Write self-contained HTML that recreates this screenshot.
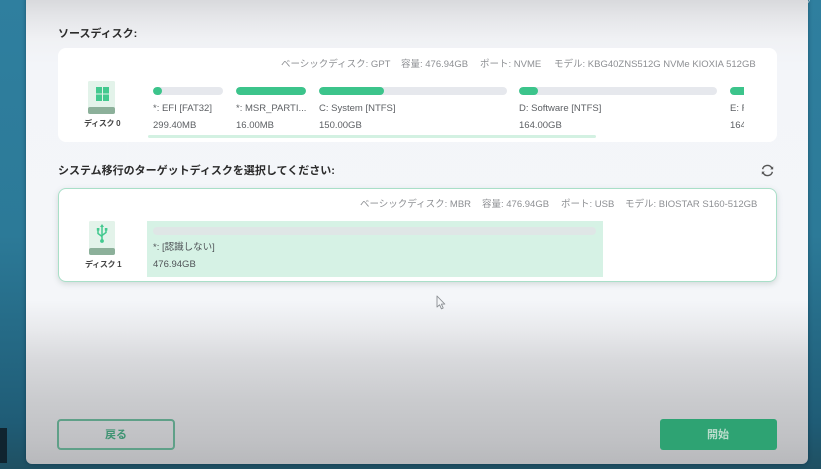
<!DOCTYPE html>
<html><head><meta charset="utf-8">
<style>
*{box-sizing:border-box}
html,body{margin:0;padding:0}
body{width:821px;height:469px;overflow:hidden;position:relative;background:linear-gradient(180deg,#2f7f9f 0,#2c7a98 50%,#1f5c76 90%,#1f5062 100%);font-family:"Liberation Sans","Noto Sans CJK JP",sans-serif;color:#555}
#wrap{position:absolute;left:0;top:0;width:821px;height:469px;filter:blur(.35px)}
.abs,.t{position:absolute}
.t{white-space:nowrap;line-height:14px}
#panel{position:absolute;left:26px;top:-6px;width:782px;height:470px;border-radius:6px;background:linear-gradient(180deg,#d4d5d8 0,#e4e5e8 22px,#f0f1f4 45px,#f3f5f9 70px,#f4f6f9 306px,#e8e9ec 336px,#d8d9dc 366px,#cacbce 406px,#c0c1c4 446px,#b8b9bc 470px);box-shadow:0 0 4px rgba(0,30,50,.45)}
.card{position:absolute;background:#fff;border-radius:8px}
.h{font-size:11px;font-weight:bold;color:#2b2b2b}
.g{font-size:9.5px;color:#8d8f93}
.p{font-size:9.5px;color:#5d6064}
.d{font-size:8px;font-weight:bold;color:#444;letter-spacing:-.3px}
.bar{position:absolute;height:8px;background:#e6e8ed;border-radius:4px;overflow:hidden}
.bar i{display:block;height:8px;background:#3cc48b;border-radius:4px}
</style></head><body>
<div id="wrap">
<div class="abs" style="left:0;top:428px;width:7px;height:35px;background:#10242f"></div>
<div class="t" style="left:782px;top:-6px;font-size:9px;color:#e8eef1">使 セッ</div>
<div id="panel"></div>

<div class="t h" style="left:58px;top:27px">ソースディスク:</div>
<div class="card" style="left:58px;top:48px;width:719px;height:94px"></div>
<div class="t g" style="left:281px;top:58px">ベーシックディスク: GPT</div>
<div class="t g" style="left:401px;top:58px">容量: 476.94GB</div>
<div class="t g" style="left:480px;top:58px">ポート: NVME</div>
<div class="t g" style="left:554px;top:58px">モデル: KBG40ZNS512G NVMe KIOXIA 512GB</div>

<svg class="abs" style="left:87px;top:80px" width="29" height="36" viewBox="0 0 29 36">
<rect x="1" y="1" width="27" height="33" rx="1.5" fill="#e3f3ea"/>
<rect x="1" y="27" width="27" height="7" rx="2" fill="#8cb09a"/>
<rect x="9" y="7" width="6" height="6.5" fill="#42c98f"/><rect x="16" y="7" width="6" height="6.5" fill="#42c98f"/>
<rect x="9" y="14.5" width="6" height="6.5" fill="#42c98f"/><rect x="16" y="14.5" width="6" height="6.5" fill="#42c98f"/>
</svg>
<div class="t d" style="left:84px;top:117px">ディスク 0</div>

<div class="bar" style="left:153px;top:87px;width:70px"><i style="width:9px"></i></div>
<div class="t p" style="left:153px;top:102px">*: EFI [FAT32]</div>
<div class="t p" style="left:153px;top:119px">299.40MB</div>
<div class="bar" style="left:236px;top:87px;width:70px"><i style="width:70px"></i></div>
<div class="t p" style="left:236px;top:102px">*: MSR_PARTI...</div>
<div class="t p" style="left:236px;top:119px">16.00MB</div>
<div class="bar" style="left:319px;top:87px;width:188px"><i style="width:65px"></i></div>
<div class="t p" style="left:319px;top:102px">C: System [NTFS]</div>
<div class="t p" style="left:319px;top:119px">150.00GB</div>
<div class="bar" style="left:519px;top:87px;width:198px"><i style="width:19px"></i></div>
<div class="t p" style="left:519px;top:102px">D: Software [NTFS]</div>
<div class="t p" style="left:519px;top:119px">164.00GB</div>
<div class="abs" style="left:730px;top:87px;width:14px;height:8px;background:#3cc48b;border-radius:4px 0 0 4px"></div>
<div class="abs" style="left:730px;top:102px;width:14px;height:32px;overflow:hidden">
<div class="t p" style="left:0;top:0">E: F</div><div class="t p" style="left:0;top:17px">164</div></div>
<div class="abs" style="left:148px;top:135px;width:448px;height:2.5px;background:#d3f1e2;border-radius:2px"></div>

<div class="t h" style="left:58px;top:164px">システム移行のターゲットディスクを選択してください:</div>
<svg class="abs" style="left:760px;top:163px" width="15" height="15" viewBox="0 0 15 15" fill="none" stroke="#555" stroke-width="1.4">
<path d="M2.6 6.2A5 5 0 0 1 11.8 5"/><path d="M12.4 8.8A5 5 0 0 1 3.2 10"/>
<path d="M13.2 3.4v3h-3z" fill="#555" stroke="none"/><path d="M1.8 11.6v-3h3z" fill="#555" stroke="none"/>
</svg>

<div class="card" style="left:58px;top:188px;width:719px;height:94px;border:1.5px solid #a9dfc8;box-shadow:0 2px 6px rgba(90,120,110,.22)"></div>
<div class="t g" style="left:360px;top:198px">ベーシックディスク: MBR</div>
<div class="t g" style="left:482px;top:198px">容量: 476.94GB</div>
<div class="t g" style="left:561px;top:198px">ポート: USB</div>
<div class="t g" style="left:625px;top:198px">モデル: BIOSTAR S160-512GB</div>

<svg class="abs" style="left:88px;top:221px" width="29" height="36" viewBox="0 0 29 36">
<rect x="1" y="0" width="26" height="34" rx="1.5" fill="#e3f3ea"/>
<rect x="1" y="27" width="26" height="7" rx="2" fill="#8cb09a"/>
<g fill="none" stroke="#42c98f" stroke-width="1.5">
<path d="M14 5v15"/><path d="M10 9v3.5l4 3"/><path d="M18 9v2.5l-4 3"/>
</g>
<path d="M14 3l2 3h-4z" fill="#42c98f"/>
<rect x="8.8" y="7" width="2.6" height="2.6" fill="#42c98f"/><rect x="16.8" y="7" width="2.6" height="2.6" fill="#42c98f"/>
<circle cx="14" cy="20" r="1.9" fill="#42c98f"/>
</svg>
<div class="t d" style="left:85px;top:258px">ディスク 1</div>

<div class="abs" style="left:147px;top:221px;width:456px;height:56px;background:#d6f2e5"></div>
<div class="abs" style="left:153px;top:227px;width:443px;height:8px;background:#dfe6e6;border-radius:4px"></div>
<div class="t p" style="left:153px;top:241px;color:#4f5357">*: [認識しない]</div>
<div class="t p" style="left:153px;top:258px;color:#4f5357">476.94GB</div>

<svg class="abs" style="left:436px;top:295px" width="11" height="15" viewBox="0 0 11 15">
<path d="M1 1v11l2.6-2.2 1.8 4 1.8-.8-1.8-3.9h3.4z" fill="#f3f5f7" stroke="#8a8e92" stroke-width=".9" stroke-linejoin="round"/>
</svg>

<div class="abs" style="left:57px;top:419px;width:118px;height:31px;border:2px solid #5fa088;border-radius:4px"></div>
<div class="t" style="left:105px;top:428px;font-size:11px;font-weight:bold;color:#3f9473">戻る</div>
<div class="abs" style="left:660px;top:419px;width:117px;height:31px;background:#2ea373;border-radius:3px"></div>
<div class="t" style="left:707px;top:428px;font-size:11px;font-weight:bold;color:#b9dccb">開始</div>
</div>
</body></html>
